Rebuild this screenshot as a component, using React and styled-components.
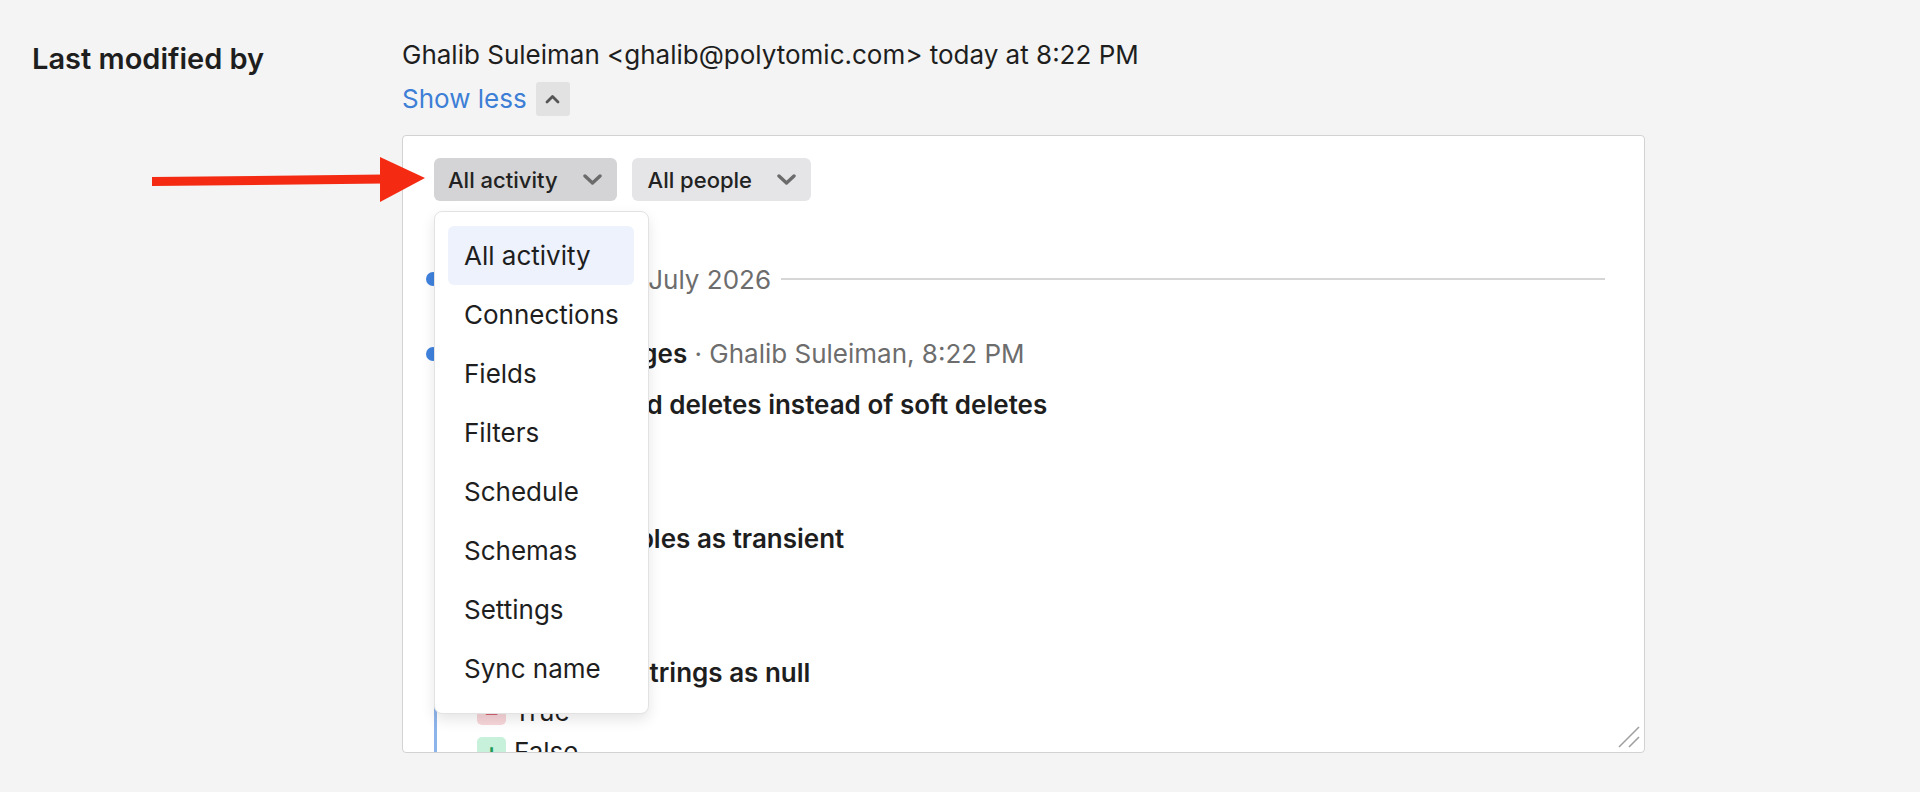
import React from "react";
import styled, { createGlobalStyle } from "styled-components";

// ----------------------------------------

const GlobalStyle = createGlobalStyle`
  html, body {
    margin: 0;
    background: #f4f4f4;
  }
  body {
    font-family: Inter, "Noto Sans", sans-serif;
    color: #1e1e1e;
    -webkit-font-smoothing: antialiased;
  }
`;

const Page = styled.div`
  position: relative;
  height: 792px;
  overflow: hidden;
  box-sizing: border-box;
  padding: 37px 0 0 32px;
`;

const Row = styled.div`
  display: grid;
  grid-template-columns: 370px 1243px;
`;

const Label = styled.div`
  margin-top: 4px;
  font-size: 29px;
  font-weight: 600;
  line-height: 36px;
`;

const Value = styled.div`
  display: flex;
  flex-direction: column;
`;

const Meta = styled.div`
  font-size: 26px;
  line-height: 36px;
`;

const ToggleRow = styled.div`
  display: flex;
  align-items: center;
  gap: 9px;
  height: 36px;
  margin-top: 8px;
`;

const ToggleLink = styled.span`
  color: #3d7fd6;
  font-size: 26px;
  line-height: 36px;
`;

const ToggleButton = styled.span`
  display: flex;
  align-items: center;
  justify-content: center;
  width: 34px;
  height: 34px;
  border-radius: 3px;
  background: #e2e2e2;
`;

const Panel = styled.div`
  position: relative;
  margin-top: 18px;
  height: 618px;
  box-sizing: border-box;
  padding: 22px 39px 0 31px;
  background: #fff;
  border: 1px solid #d2d2d2;
  border-radius: 4px;
  overflow: hidden;
`;

const FilterRow = styled.div`
  display: flex;
  gap: 15px;
`;

const DropdownWrap = styled.div`
  position: relative;
`;

const FilterButton = styled.div`
  display: flex;
  align-items: center;
  gap: 25px;
  height: 43px;
  box-sizing: border-box;
  padding: 0 15px 0 ${(props) => (props.$open ? 14 : 16)}px;
  border-radius: 6px;
  background: ${(props) => (props.$open ? "#d4d4d6" : "#e5e5e7")};
  font-size: 22px;
  font-weight: 500;
  color: #222;
`;

const Menu = styled.div`
  position: absolute;
  top: calc(100% + 10px);
  left: 0;
  z-index: 2;
  width: 215px;
  box-sizing: border-box;
  padding: 14px 14px 15px 13px;
  background: #fff;
  border: 1px solid #e2e2e2;
  border-radius: 8px;
  box-shadow: 0 6px 14px rgba(0, 0, 0, 0.1);
`;

const MenuItem = styled.div`
  display: flex;
  align-items: center;
  height: 59px;
  padding-left: 16px;
  border-radius: 6px;
  background: ${(props) => (props.$active ? "#edf2fd" : "transparent")};
  font-size: 26px;
  color: #1e1e1e;
`;

const Timeline = styled.div`
  position: relative;
  margin-top: 60px;
`;

const Dot = styled.span`
  position: absolute;
  left: -8px;
  top: 11px;
  width: 14px;
  height: 14px;
  border-radius: 50%;
  background: #3f82de;
`;

const DateRow = styled.div`
  position: relative;
  display: flex;
  align-items: center;
  gap: 10px;
  height: 36px;
  padding-left: 62px;
  font-size: 26px;
  color: #6d6d6d;
`;

const Rule = styled.div`
  flex: 1;
  height: 2px;
  background: #d6d6d6;
`;

const Entry = styled.div`
  position: relative;
  margin-top: 39px;
  padding-left: 40px;
  border-left: 3px solid #8db4ea;
`;

const EntryHead = styled.div`
  padding-left: 7px;
  font-size: 26px;
  line-height: 36px;
  color: #6d6d6d;

  strong {
    font-weight: 600;
    color: #1e1e1e;
  }
`;

const EntryDot = styled(Dot)`
  left: -11px;
`;

const SettingList = styled.div`
  display: flex;
  flex-direction: column;
  gap: 18px;
  margin-top: 15px;
`;

const SettingTitle = styled.div`
  font-size: 26px;
  font-weight: 600;
  line-height: 36px;
  white-space: nowrap;
`;

const DiffRow = styled.div`
  display: flex;
  align-items: center;
  gap: 8px;
  height: 40px;
  font-size: 26px;
`;

const Badge = styled.span`
  display: flex;
  align-items: center;
  justify-content: center;
  width: 29px;
  height: 28px;
  border-radius: 5px;
  background: ${(props) => (props.$kind === "add" ? "#c8f1dc" : "#f8d6da")};
  color: ${(props) => (props.$kind === "add" ? "#1f9a5a" : "#d1475a")};
  font-size: 24px;
  font-weight: 600;
`;

const Resize = styled.svg`
  position: absolute;
  right: 3px;
  bottom: 3px;
`;

const Arrow = styled.svg`
  position: absolute;
  left: 152px;
  top: 155px;
`;

// -------------------------------------

const ChevronDown = () => (
  <svg width="19" height="11" viewBox="0 0 19 11">
    <polyline
      points="2,2 9.5,9 17,2"
      fill="none"
      stroke="#6b6b6b"
      strokeWidth="3.4"
      strokeLinecap="round"
      strokeLinejoin="round"
    />
  </svg>
);

const ChevronUp = () => (
  <svg width="15" height="10" viewBox="0 0 15 10">
    <polyline
      points="2,8 7.5,2.5 13,8"
      fill="none"
      stroke="#555"
      strokeWidth="2.8"
      strokeLinecap="round"
      strokeLinejoin="round"
    />
  </svg>
);

const activities = [
  "All activity",
  "Connections",
  "Fields",
  "Filters",
  "Schedule",
  "Schemas",
  "Settings",
  "Sync name",
];

const settings = [
  { title: "Default to hard deletes instead of soft deletes", from: "False", to: "True" },
  { title: "Mark view tables as transient", from: "False", to: "True" },
  { title: "Treat empty strings as null", from: "True", to: "False" },
];

const App = () => {
  return (
    <Page>
      <GlobalStyle />
      <Row>
        <Label>Last modified by</Label>
        <Value>
          <Meta>Ghalib Suleiman &lt;ghalib@polytomic.com&gt; today at 8:22 PM</Meta>
          <ToggleRow>
            <ToggleLink>Show less</ToggleLink>
            <ToggleButton>
              <ChevronUp />
            </ToggleButton>
          </ToggleRow>

          <Panel>
            <FilterRow>
              <DropdownWrap>
                <FilterButton $open>
                  All activity
                  <ChevronDown />
                </FilterButton>
                <Menu>
                  {activities.map((item, i) => (
                    <MenuItem key={item} $active={i === 0}>
                      {item}
                    </MenuItem>
                  ))}
                </Menu>
              </DropdownWrap>
              <FilterButton>
                All people
                <ChevronDown />
              </FilterButton>
            </FilterRow>

            <Timeline>
              <DateRow>
                <Dot />
                Tuesday, 14 July 2026
                <Rule />
              </DateRow>

              <Entry>
                <EntryDot />
                <EntryHead>
                  <strong>Setting changes</strong> · Ghalib Suleiman, 8:22 PM
                </EntryHead>
                <SettingList>
                  {settings.map((s) => (
                    <div key={s.title}>
                      <SettingTitle>{s.title}</SettingTitle>
                      <DiffRow>
                        <Badge $kind="remove">−</Badge>
                        {s.from}
                      </DiffRow>
                      <DiffRow>
                        <Badge $kind="add">+</Badge>
                        {s.to}
                      </DiffRow>
                    </div>
                  ))}
                </SettingList>
              </Entry>
            </Timeline>

            <Resize width="24" height="24" viewBox="0 0 24 24">
              <line x1="2" y1="22" x2="22" y2="2" stroke="#a0a0a0" strokeWidth="1.6" />
              <line x1="12" y1="22" x2="22" y2="12" stroke="#a0a0a0" strokeWidth="1.6" />
            </Resize>
          </Panel>
        </Value>
      </Row>

      <Arrow width="276" height="50" viewBox="0 0 276 50">
        <polygon points="0,22 232,19.5 232,28.5 0,31" fill="#f42a12" />
        <polygon points="228,2 273,23 228,47" fill="#f42a12" />
      </Arrow>
    </Page>
  );
};

export default App;
